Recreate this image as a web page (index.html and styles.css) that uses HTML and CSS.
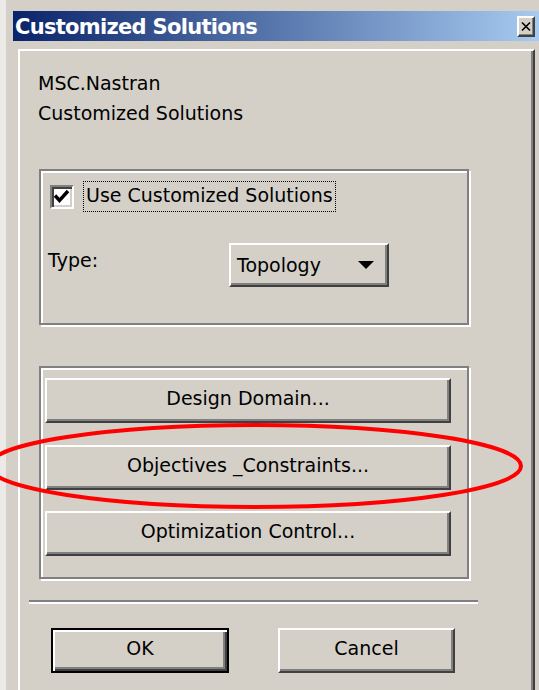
FILE: index.html
```html
<!DOCTYPE html>
<html lang="en">
<head>
<meta charset="utf-8">
<title>Customized Solutions</title>
<link rel="stylesheet" href="styles.css">
</head>
<body>
<div class="window">
  <div class="titlebar">
    <span class="title">Customized Solutions</span>
    <button class="close" type="button" aria-label="Close">
      <svg viewBox="0 0 14 15" width="14" height="15"><path d="M3 3.5 L11 11.5 M11 3.5 L3 11.5" stroke="#000" stroke-width="1.6" fill="none"/></svg>
    </button>
  </div>

  <div class="frame">
    <div class="intro">
      <div>MSC.Nastran</div>
      <div>Customized Solutions</div>
    </div>

    <div class="group group-options">
      <div class="check-row">
        <span class="checkbox">
          <svg viewBox="0 0 20 20" width="20" height="20"><polyline points="3,8.5 7.5,13.5 16,4" stroke="#000" stroke-width="3.4" fill="none"/></svg>
        </span>
        <span class="check-label">Use Customized Solutions</span>
      </div>
      <div class="type-row">
        <span class="type-label">Type:</span>
        <button class="combo" type="button"><span>Topology</span><span class="arrow"></span></button>
      </div>
    </div>

    <div class="group group-actions">
      <button class="btn btn-wide" type="button">Design Domain...</button>
      <button class="btn btn-wide" type="button">Objectives _Constraints...</button>
      <button class="btn btn-wide" type="button">Optimization Control...</button>
    </div>

    <div class="separator"></div>

    <div class="footer">
      <button class="btn btn-default btn-ok" type="button">OK</button>
      <button class="btn btn-cancel" type="button">Cancel</button>
    </div>
  </div>
</div>

<svg class="mark" width="539" height="690" viewBox="0 0 539 690">
  <ellipse cx="255" cy="466" rx="266" ry="41" fill="none" stroke="#ff0000" stroke-width="4"/>
</svg>
</body>
</html>
```

FILE: styles.css
```css
* {
  box-sizing: border-box;
}

html,
body {
  margin: 0;
}

body {
  position: relative;
  width: 539px;
  height: 690px;
  overflow: hidden;
  background: #eceae6;
  font-family: "DejaVu Sans", sans-serif;
  font-size: 19px;
  color: #000;
}

button {
  font: inherit;
  color: inherit;
  margin: 0;
  padding: 0;
  cursor: default;
}

/* dialog window */
.window {
  margin-left: 6px;
  height: 690px;
  padding-top: 11px;
  background: #d4d0c8;
}

.titlebar {
  margin-left: 7px;
  height: 30px;
  display: flex;
  align-items: center;
  justify-content: space-between;
  padding: 0 4px 0 2px;
  background: linear-gradient(to right, #0a246a, #a6caf0);
}

.title {
  color: #fff;
  font-weight: bold;
  font-size: 21px;
  letter-spacing: -0.7px;
  line-height: 30px;
  padding-top: 1px;
}

.close {
  width: 18px;
  height: 21px;
  display: flex;
  align-items: center;
  justify-content: center;
  background: #d4d0c8;
  border: 2px solid;
  border-color: #fff #404040 #404040 #fff;
  box-shadow: inset -1px -1px 0 #808080;
}

.close svg {
  display: block;
}

/* raised client frame; its lower edge sits below the visible window */
.frame {
  margin: 8px 0 0 12px;
  width: 517px;
  height: 641px;
  overflow: hidden;
  padding: 17px 0 0 18px;
  border-top: 2px solid #fff;
  border-left: 2px solid #fff;
  border-right: 2px solid #404040;
  box-shadow: inset -2px 0 0 #808080;
}

.intro {
  line-height: 30px;
}

/* etched group boxes */
.group {
  width: 430px;
  margin-left: 1px;
  border: 2px solid #808080;
  box-shadow: inset 2px 2px 0 #fff, 2px 2px 0 #fff;
}

.group-options {
  margin-top: 41px;
  height: 156px;
  padding: 10px 0 0 9px;
}

.check-row {
  display: flex;
  align-items: center;
}

.checkbox {
  width: 24px;
  height: 24px;
  flex: none;
  background: #fff;
  border: 2px solid;
  border-color: #808080 #fff #fff #808080;
  box-shadow: inset 2px 2px 0 #404040, inset -2px -2px 0 #d4d0c8;
}

.checkbox svg {
  display: block;
}

.check-label {
  margin-left: 9px;
  padding: 0 2px 3px 2px;
  line-height: 26px;
  border: 1px dotted #000;
}

.type-row {
  margin: 31px 0 0 -2px;
  display: flex;
  align-items: flex-start;
}

.type-label {
  width: 181px;
  padding-top: 2px;
  line-height: 30px;
}

.combo {
  width: 160px;
  height: 44px;
  display: flex;
  align-items: center;
  justify-content: space-between;
  padding: 0 13px 0 6px;
  background: #d4d0c8;
  border: 2px solid;
  border-color: #fff #404040 #404040 #fff;
  box-shadow: inset -2px -2px 0 #808080;
  text-align: left;
}

.arrow {
  width: 0;
  height: 0;
  border-left: 8px solid transparent;
  border-right: 8px solid transparent;
  border-top: 8px solid #000;
}

.group-actions {
  margin-top: 41px;
  height: 213px;
  padding: 10px 16px 0 4px;
  display: flex;
  flex-direction: column;
  gap: 21.5px;
}

/* push buttons */
.btn {
  height: 45px;
  padding-bottom: 5px;
  background: #d4d0c8;
  border: 2px solid;
  border-color: #fff #404040 #404040 #fff;
  box-shadow: inset -2px -2px 0 #808080;
  text-align: center;
  line-height: 36px;
}

.btn-wide {
  width: 100%;
}

.btn-default {
  border-color: #000;
  box-shadow: inset 2px 2px 0 #fff, inset -2px -2px 0 #404040, inset -4px -4px 0 #808080;
}

.separator {
  margin: 21px 0 0 -9px;
  width: 449px;
  height: 4px;
  border-top: 2px solid #808080;
  border-bottom: 2px solid #fff;
}

.footer {
  margin: 24px 0 0 13px;
  display: flex;
}

.btn-ok {
  width: 178px;
}

.btn-cancel {
  width: 177px;
  margin-left: 49px;
}

/* red annotation ring drawn over the dialog */
.mark {
  position: absolute;
  top: 0;
  left: 0;
  pointer-events: none;
}
```
